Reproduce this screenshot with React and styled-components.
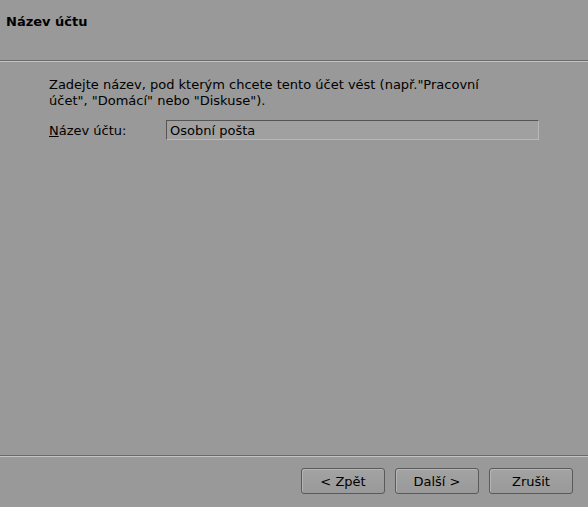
import styled, { createGlobalStyle } from "styled-components";

const Global = createGlobalStyle`
  html, body {
    margin: 0;
    padding: 0;
    background: #999999;
  }
  body {
    font-family: "DejaVu Sans", "Liberation Sans", sans-serif;
    font-size: 13px;
    color: #000;
  }
`;

const Dialog = styled.div`
  display: flex;
  flex-direction: column;
  height: 100vh;
  background: #999999;
`;

const Header = styled.header`
  height: 60px;
  box-sizing: border-box;
  padding: 14px 0 0 6px;
`;

const Title = styled.h1`
  margin: 0;
  font-size: 13px;
  font-weight: bold;
`;

const Separator = styled.div`
  height: 1px;
  background: #6b6b6b;
  border-bottom: 1px solid #c4c4c4;
`;

const Body = styled.main`
  flex: 1;
  padding: 15px 49px 0 49px;
`;

const Intro = styled.p`
  margin: 0;
  line-height: 16px;
  max-width: 460px;
`;

const FormRow = styled.div`
  display: flex;
  align-items: center;
  margin-top: 11px;
`;

const Label = styled.label`
  width: 117px;
  u {
    text-decoration: underline;
  }
`;

const Input = styled.input`
  width: 373px;
  height: 20px;
  box-sizing: border-box;
  padding: 0 3px;
  font-family: inherit;
  font-size: 13px;
  color: #000;
  background: #a0a0a0;
  border: 1px solid;
  border-color: #555 #b8b8b8 #b8b8b8 #555;
  outline: none;
`;

const Footer = styled.footer`
  display: flex;
  justify-content: flex-end;
  gap: 10px;
  height: 50px;
  box-sizing: border-box;
  padding: 11px 15px 0 0;
`;

const Button = styled.button`
  width: 84px;
  height: 26px;
  font-family: inherit;
  font-size: 13px;
  color: #000;
  background: linear-gradient(#a3a3a3, #999);
  border: 1px solid #5a5a5a;
  border-radius: 3px;
  box-shadow: inset 1px 1px 0 #b5b5b5;
  padding: 0;
`;

export default function App() {
  return (
    <Dialog>
      <Global />
      <Header>
        <Title>Název účtu</Title>
      </Header>
      <Separator />
      <Body>
        <Intro>
          Zadejte název, pod kterým chcete tento účet vést (např."Pracovní
          účet", "Domácí" nebo "Diskuse").
        </Intro>
        <FormRow>
          <Label htmlFor="acct">
            <u>N</u>ázev účtu:
          </Label>
          <Input id="acct" defaultValue="Osobní pošta" />
        </FormRow>
      </Body>
      <Separator />
      <Footer>
        <Button>&lt; Zpět</Button>
        <Button>Další &gt;</Button>
        <Button>Zrušit</Button>
      </Footer>
    </Dialog>
  );
}
